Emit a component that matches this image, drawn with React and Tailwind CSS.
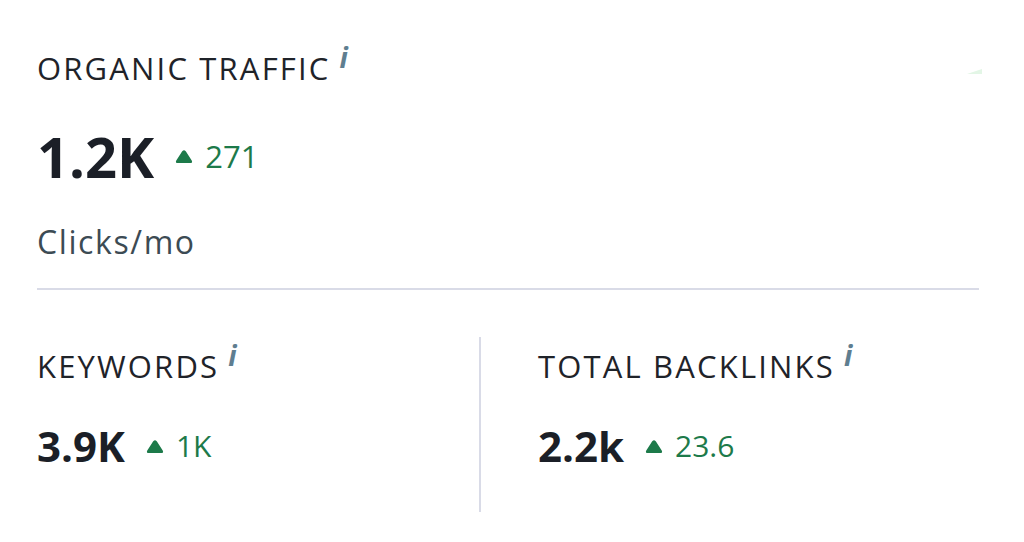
import React from "react";

function Info() {
  return (
    <span className="ml-[9px] -translate-y-[10px] inline-block text-[28px] font-bold italic leading-none tracking-normal text-[#5f7e90]">i</span>
  );
}

function Up({ children }) {
  return (
    <span className="flex items-center gap-[12px] text-[#1d7a4a]">
      <svg width="18" height="15" viewBox="0 0 17 13" className="shrink-0">
        <path d="M8.5 0.6 C9.6 0.6 10.3 1.5 11.1 2.9 L15.8 10.2 C16.6 11.7 16 12.7 14.3 12.7 L2.7 12.7 C1 12.7 0.4 11.7 1.2 10.2 L5.9 2.9 C6.7 1.5 7.4 0.6 8.5 0.6 Z" fill="#1d7a4a" />
      </svg>
      <span>{children}</span>
    </span>
  );
}

function Title({ children }) {
  return (
    <div className="flex items-start text-[31px] leading-none tracking-[0.07em] text-[#1f2329]">
      <span>{children}</span>
      <Info />
    </div>
  );
}

export default function App() {
  return (
    <div
      className="relative w-[1024px] h-[542px] overflow-hidden bg-white pl-[37px] pr-[45px] pt-[53px]"
      style={{ fontFamily: '"Open Sans", "Noto Sans", sans-serif' }}
    >
      <svg className="absolute left-[967px] top-[69px]" width="16" height="6" viewBox="0 0 16 6">
        <polygon points="0,5 15,0 15,5" fill="#e3f6e6" />
      </svg>
      <Title>ORGANIC TRAFFIC</Title>
      <div className="mt-[44px] flex h-[56px] items-center gap-[21px]">
        <span className="text-[56px] font-bold leading-none text-[#1b1f27]">1.2K</span>
        <span className="text-[31px] font-medium leading-none"><Up>271</Up></span>
      </div>
      <div className="mt-[42px] text-[32px] leading-none tracking-[0.05em] text-[#3c4b54]">Clicks/mo</div>
      <div className="mt-[30px] h-[2px] bg-[#d9dbe7]" />
      <div className="mt-[47px] flex">
        <div className="w-[442px] pt-[14px]">
          <Title>KEYWORDS</Title>
          <div className="mt-[43px] flex h-[42px] items-center gap-[21px]">
            <span className="text-[42px] font-bold leading-none text-[#1b1f27]">3.9K</span>
            <span className="text-[30px] font-medium leading-none"><Up>1K</Up></span>
          </div>
        </div>
        <div className="w-[2px] h-[175px] bg-[#d9dbe7]" />
        <div className="pl-[57px] pt-[14px]">
          <Title>TOTAL BACKLINKS</Title>
          <div className="mt-[43px] flex h-[42px] items-center gap-[21px]">
            <span className="text-[42px] font-bold leading-none text-[#1b1f27]">2.2k</span>
            <span className="text-[30px] font-medium leading-none"><Up>23.6</Up></span>
          </div>
        </div>
      </div>
    </div>
  );
}
